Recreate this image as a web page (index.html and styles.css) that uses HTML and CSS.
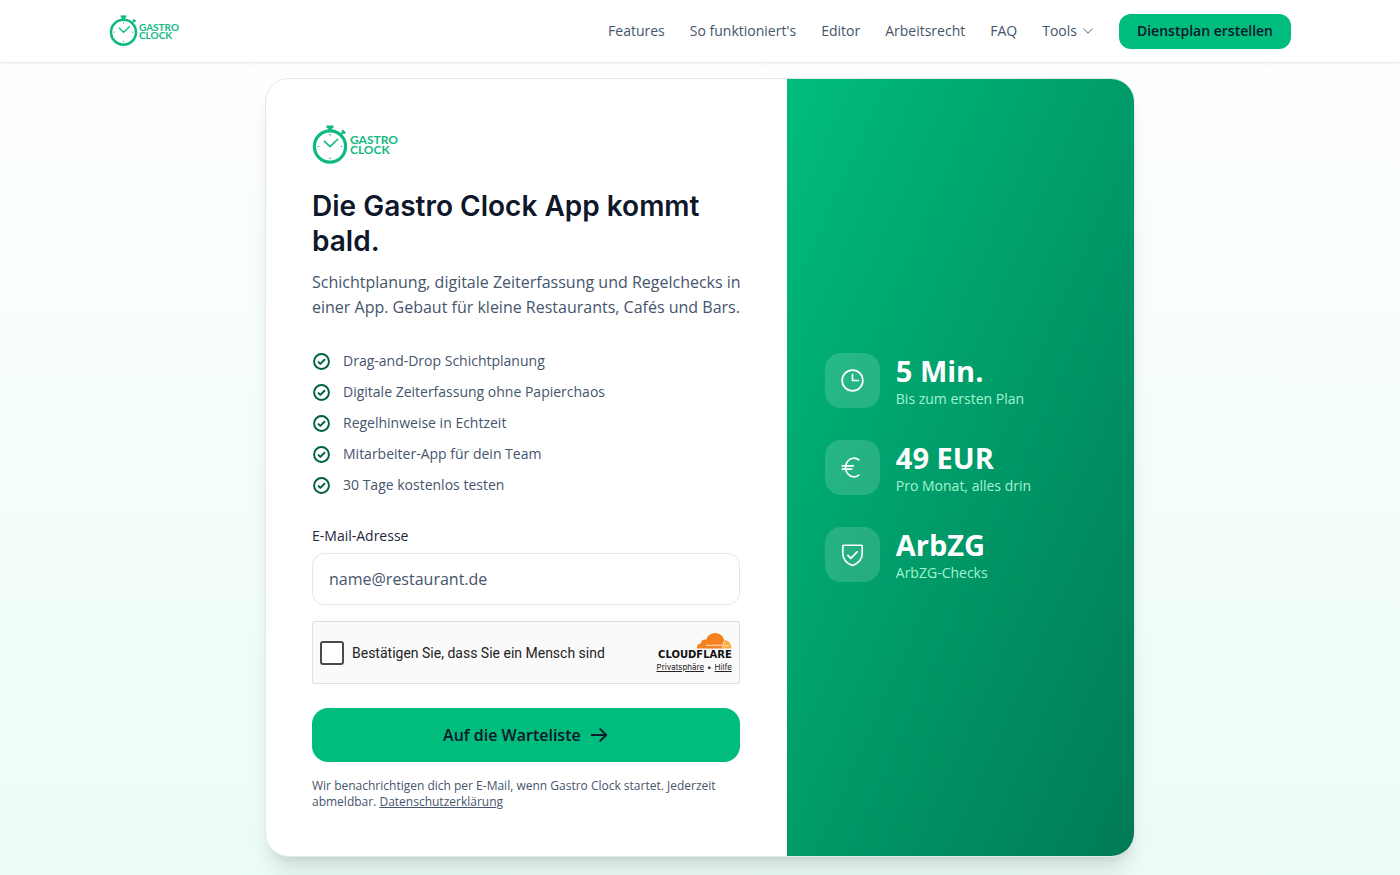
FILE: index.html
```html
<!DOCTYPE html>
<html lang="de">
<head>
<meta charset="utf-8">
<meta name="viewport" content="width=device-width, initial-scale=1">
<title>Gastro Clock – Warteliste</title>
<link rel="stylesheet" href="styles.css">
</head>
<body>
<svg class="defs" aria-hidden="true">
  <symbol id="watch" viewBox="0 0 36 40">
    <g fill="none" stroke="currentColor">
      <circle cx="18" cy="21.500" r="15.600" stroke-width="3.200"/>
      <path d="M14.500 1.900h7" stroke-width="2.800"/>
      <path d="M18 2v4" stroke-width="3.600"/>
      <path d="M29.300 9l2.400-2.400" stroke-width="1.800"/>
      <path d="M30.100 5.400l3 3" stroke-width="2.200"/>
      <path d="M12 15.800l6 5.800 8-7.600" stroke-width="1.600"/>
      <path d="M18 9v1.500M18 32.500v1.500M5.700 21.500h1.500M28.800 21.500h1.500" stroke-width="1.200"/>
    </g>
  </symbol>
  <symbol id="check" viewBox="0 0 256 256">
    <g fill="none" stroke="currentColor" stroke-width="26" stroke-linecap="round" stroke-linejoin="round">
      <circle cx="128" cy="128" r="100"/>
      <path d="M88 136l24 24 56-56"/>
    </g>
  </symbol>
</svg>

<header class="site-header">
  <div class="header-inner">
    <a href="#" class="logo logo-small"><svg aria-hidden="true"><use href="#watch"/></svg><span>GASTRO<br>CLOCK</span></a>
    <nav class="nav">
      <a href="#features">Features</a>
      <a href="#ablauf">So funktioniert's</a>
      <a href="#editor">Editor</a>
      <a href="#arbeitsrecht">Arbeitsrecht</a>
      <a href="#faq">FAQ</a>
      <button type="button" class="nav-tools">Tools
        <svg width="12" height="12" viewBox="0 0 256 256" fill="none" stroke="currentColor" stroke-width="20" stroke-linecap="round" stroke-linejoin="round"><path d="M224 80l-96 96-96-96"/></svg>
      </button>
      <a href="#dienstplan" class="cta">Dienstplan erstellen</a>
    </nav>
  </div>
</header>

<main class="page">
  <section class="card">
    <div class="signup">
      <div class="logo"><svg aria-hidden="true"><use href="#watch"/></svg><span>GASTRO<br>CLOCK</span></div>
      <h1>Die Gastro Clock App kommt bald.</h1>
      <p class="lead">Schichtplanung, digitale Zeiterfassung und Regelchecks in einer App. Gebaut für kleine Restaurants, Cafés und Bars.</p>
      <ul class="benefits">
        <li><svg><use href="#check"/></svg>Drag-and-Drop Schichtplanung</li>
        <li><svg><use href="#check"/></svg>Digitale Zeiterfassung ohne Papierchaos</li>
        <li><svg><use href="#check"/></svg>Regelhinweise in Echtzeit</li>
        <li><svg><use href="#check"/></svg>Mitarbeiter-App für dein Team</li>
        <li><svg><use href="#check"/></svg>30 Tage kostenlos testen</li>
      </ul>
      <form>
        <label class="field-label" for="email">E-Mail-Adresse</label>
        <input class="field" id="email" type="email" placeholder="name@restaurant.de">
        <div class="challenge">
          <label class="challenge-check"><input type="checkbox"><span>Bestätigen Sie, dass Sie ein Mensch sind</span></label>
          <div class="provider">
            <svg width="36" height="17" viewBox="0 0 36 17" aria-hidden="true">
              <path fill="#f6821f" d="M1 16.500C.6 13.500 2.700 11.300 5.200 11.200c-.2-2.700 2.600-4.600 4.800-3.300C11.300 3.800 14.800 1 19 1c4.700 0 8.300 3 9.300 7.300l-1.700 8.200z"/>
              <path fill="#fbad41" d="M28.300 8.300c4.300-.4 7.200 3.400 7 8.200H25.500l1.400-4z"/>
              <path d="M10 13.400l15.800-.3c.8 0 1.300-.5 1.600-1.300l.8-2.600" fill="none" stroke="#fff" stroke-width=".8"/>
              <path d="M26 16.500c.5-2 .9-2.600 2.200-2.700l4.500-.3" fill="none" stroke="#fff" stroke-width=".7"/>
            </svg>
            <strong>CLOUDFLARE</strong>
            <span class="provider-links"><a href="#privat">Privatsphäre</a><span>•</span><a href="#hilfe">Hilfe</a></span>
          </div>
        </div>
        <button class="submit" type="submit">Auf die Warteliste
          <svg width="20" height="20" viewBox="0 0 256 256" fill="none" stroke="currentColor" stroke-width="24" stroke-linecap="round" stroke-linejoin="round"><path d="M36 128h184M144 52l76 76-76 76"/></svg>
        </button>
      </form>
      <p class="note">Wir benachrichtigen dich per E-Mail, wenn Gastro Clock startet. Jederzeit abmeldbar. <a href="#datenschutz">Datenschutzerklärung</a></p>
    </div>
    <aside class="stats">
      <div class="stat">
        <span class="tile"><svg viewBox="0 0 256 256"><circle cx="128" cy="128" r="98"/><path d="M128 72v56h56"/></svg></span>
        <div><strong>5 Min.</strong><p>Bis zum ersten Plan</p></div>
      </div>
      <div class="stat">
        <span class="tile"><svg viewBox="0 0 256 256"><path d="M188 56A80 88 0 1 0 188 200M32 112h104M32 144h88"/></svg></span>
        <div><strong>49 EUR</strong><p>Pro Monat, alles drin</p></div>
      </div>
      <div class="stat">
        <span class="tile"><svg viewBox="0 0 256 256"><path d="M36 114.800V48a8 8 0 0 1 8-8h168a8 8 0 0 1 8 8v66.800c0 84-75.300 111.800-89.500 116.500a8 8 0 0 1-5 0C111.300 226.600 36 198.800 36 114.800zM84 136l28 28 60-60"/></svg></span>
        <div><strong>ArbZG</strong><p>ArbZG-Checks</p></div>
      </div>
    </aside>
  </section>
</main>
</body>
</html>
```

FILE: styles.css
```css
*, *::before, *::after { box-sizing: border-box; }

body {
  margin: 0;
  min-height: 100vh;
  font-family: "Open Sans", "Noto Sans", sans-serif;
  font-size: 14px;
  line-height: 20px;
  color: #45556c;
  background: linear-gradient(180deg, #ffffff 0%, #ecfdf5 100%);
}

h1, p, ul { margin: 0; padding: 0; }
button, input { font: inherit; color: inherit; }
.defs { position: absolute; width: 0; height: 0; }

/* Logo */
.logo {
  display: flex;
  align-items: center;
  gap: 2px;
  font-family: Lato, sans-serif;
  font-size: 12px;
  font-weight: 700;
  line-height: 10px;
  color: #10b981;
  text-decoration: none;
}
.logo svg { width: 36px; height: 40px; }
.logo-small { gap: 1px; font-size: 10px; line-height: 8px; }
.logo-small svg { width: 29px; height: 32px; }

/* Header */
.site-header {
  background: #fff;
  border-bottom: 1px solid #eceff1;
  box-shadow: 0 1px 2px rgba(0, 0, 0, .06);
}
.header-inner {
  display: flex;
  align-items: center;
  justify-content: space-between;
  max-width: 1182px;
  height: 62px;
  margin: 0 auto;
}
.nav { display: flex; align-items: center; gap: 25px; }
.nav a, .nav-tools { color: #45556c; text-decoration: none; white-space: nowrap; }
.nav-tools {
  display: flex;
  align-items: center;
  gap: 5px;
  padding: 0;
  border: 0;
  background: none;
}
.nav .cta {
  padding: 7px 18px 8px;
  border-radius: 12px;
  background: #00bc7d;
  color: #0f172b;
  font-weight: 600;
}

/* Card */
.page { padding: 15px 24px 19px; }
.card {
  display: grid;
  grid-template-columns: 3fr 2fr;
  max-width: 870px;
  margin: 0 auto;
  overflow: hidden;
  border: 1px solid #e2e8f0;
  border-radius: 24px;
  background: #fff;
  box-shadow: 0 20px 24px -5px rgba(0, 0, 0, .1), 0 8px 10px -6px rgba(0, 0, 0, .1);
}
.signup { padding: 46px 47px 46px 46px; }
h1 {
  margin-top: 24px;
  font-family: Inter, sans-serif;
  font-size: 28px;
  font-weight: 600;
  line-height: 35px;
  color: #0f172b;
}
.lead { margin-top: 11px; margin-right: -8px; font-size: 16px; line-height: 25px; }
.benefits {
  display: grid;
  gap: 11px;
  margin-top: 31px;
  list-style: none;
}
.benefits li { display: flex; align-items: center; gap: 12px; }
.benefits svg { width: 19px; height: 19px; color: #006045; }

/* Form */
.field-label {
  display: block;
  margin-top: 31px;
  font-weight: 500;
  color: #1d293d;
}
.field {
  display: block;
  width: 100%;
  height: 52px;
  margin-top: 7px;
  padding: 0 16px;
  border: 1px solid #e2e8f0;
  border-radius: 12px;
  background: #fff;
  font-size: 16px;
}
.field::placeholder { color: #45556c; opacity: 1; }
.challenge {
  display: flex;
  align-items: center;
  justify-content: space-between;
  height: 63px;
  margin-top: 16px;
  padding: 0 7px;
  border: 1px solid #e0e0e0;
  border-radius: 2px;
  background: #fafafa;
  font-family: Roboto, sans-serif;
  color: #232323;
}
.challenge-check { display: flex; align-items: center; gap: 8px; }
.challenge-check input {
  appearance: none;
  width: 24px;
  height: 24px;
  margin: 0;
  border: 2px solid #4a4a4a;
  border-radius: 3px;
  background: #fff;
}
.provider { display: flex; flex-direction: column; align-items: flex-end; }
.provider strong {
  font-family: "DejaVu Sans", sans-serif;
  font-size: 10px;
  font-weight: 700;
  line-height: 12px;
  color: #111;
}
.provider-links {
  display: flex;
  gap: 3px;
  font-family: Inter, sans-serif;
  font-size: 8px;
  line-height: 12px;
}
.provider-links a { color: #232323; }
.submit {
  display: flex;
  align-items: center;
  justify-content: center;
  gap: 8px;
  width: 100%;
  height: 54px;
  margin-top: 24px;
  border: 0;
  border-radius: 16px;
  background: #00bc7d;
  color: #0f172b;
  font-size: 16px;
  font-weight: 600;
}
.note { margin-top: 16px; font-size: 12px; line-height: 16px; }
.note a { color: inherit; }

/* Stats */
.stats {
  display: flex;
  flex-direction: column;
  justify-content: center;
  gap: 31px;
  padding: 38px;
  background: linear-gradient(to bottom right, #00bc7d, #007a55);
  color: #fff;
}
.stat { display: flex; align-items: center; gap: 16px; }
.tile {
  display: grid;
  place-items: center;
  width: 55px;
  height: 55px;
  border-radius: 16px;
  background: rgba(255, 255, 255, .15);
}
.tile svg {
  width: 27px;
  height: 27px;
  fill: none;
  stroke: #fff;
  stroke-width: 16px;
  stroke-linecap: round;
  stroke-linejoin: round;
}
.stat strong { display: block; font-size: 29px; font-weight: 700; line-height: 36px; }
.stat p { color: #a4f4cf; }
```
